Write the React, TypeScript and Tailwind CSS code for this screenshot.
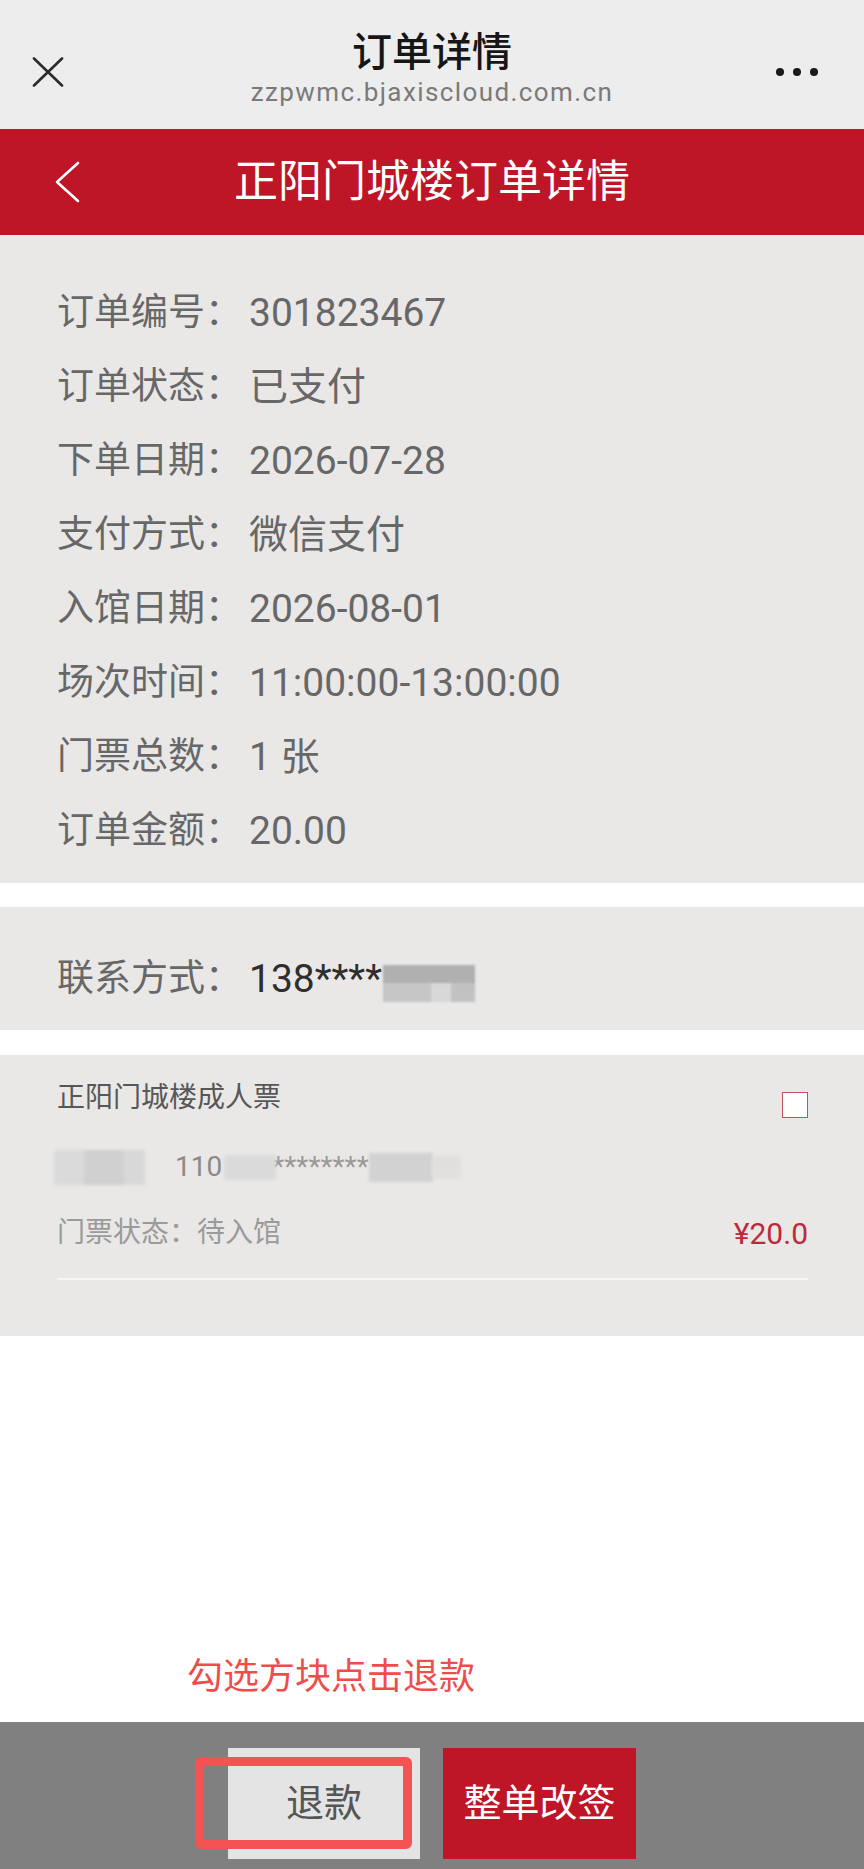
import React from "react";

const rows = [
  ["订单编号：", "301823467"],
  ["订单状态：", "已支付"],
  ["下单日期：", "2026-07-28"],
  ["支付方式：", "微信支付"],
  ["入馆日期：", "2026-08-01"],
  ["场次时间：", "11:00:00-13:00:00"],
  ["门票总数：", "1 张"],
  ["订单金额：", "20.00"],
];

export default function App() {
  return (
    <div className="w-full min-h-[1869px] bg-white flex flex-col font-[Roboto,'Noto_Sans_CJK_SC',sans-serif]">
      {/* browser title bar */}
      <div className="h-[129px] bg-[#ededed] grid grid-cols-[1fr_auto_1fr]">
        <div className="pl-[32px] pt-[57px]">
          <svg width="32" height="30" viewBox="0 0 32 30" fill="none" stroke="#2b2b2b" strokeWidth="2.6" strokeLinecap="round">
            <path d="M2 1.5 L30 28.5 M30 1.5 L2 28.5" />
          </svg>
        </div>
        <div className="pt-[30px] flex flex-col items-center">
          <div className="text-[40px] leading-[46px] font-medium text-[#161616]">订单详情</div>
          <div className="text-[26px] leading-[32px] tracking-[1.4px] text-[#7a7a7a]">zzpwmc.bjaxiscloud.com.cn</div>
        </div>
        <div className="flex justify-end items-start pr-[46px] pt-[68px] gap-[9px]">
          <div className="w-[8px] h-[8px] rounded-full bg-[#1a1a1a]" />
          <div className="w-[8px] h-[8px] rounded-full bg-[#1a1a1a]" />
          <div className="w-[8px] h-[8px] rounded-full bg-[#1a1a1a]" />
        </div>
      </div>

      {/* red header */}
      <div className="h-[106px] bg-[#be1527] grid grid-cols-[1fr_auto_1fr] items-center">
        <div className="pl-[54px] flex items-center">
          <svg width="26" height="42" viewBox="0 0 26 42" fill="none" stroke="#fff" strokeWidth="2.6" strokeLinecap="round" strokeLinejoin="round">
            <path d="M24 2 L3 21 L24 40" />
          </svg>
        </div>
        <div className="text-[44px] leading-[52px] text-white">正阳门城楼订单详情</div>
        <div />
      </div>

      {/* order info */}
      <div className="bg-[#e9e8e7] pt-[41px] pb-[15px] px-[57px]">
        {rows.map(([k, v]) => (
          <div key={k} className="flex items-center h-[74px] text-[37px] text-[#676767]">
            <span className="w-[192px] shrink-0">{k}</span>
            <span className="text-[39px]">{v}</span>
          </div>
        ))}
      </div>

      {/* contact */}
      <div className="mt-[24px] bg-[#e9e8e7] pt-[35px] pb-[14px] px-[57px]">
        <div className="flex items-center h-[74px] text-[37px] text-[#676767]">
          <span className="w-[192px] shrink-0">联系方式：</span>
          <span className="text-[39px] text-[#2e2e2e]">138****</span>
          <div className="ml-[1px] mt-[8px] w-[92px] h-[37px] flex flex-col blur-[1px]">
            <div className="h-[18px] bg-[#b0b0b0]" />
            <div className="h-[19px] flex">
              <div className="w-[48px] bg-[#c6c6c6]" />
              <div className="w-[20px] bg-[#d8d8d8]" />
              <div className="w-[24px] bg-[#c2c2c2]" />
            </div>
          </div>
        </div>
      </div>

      {/* ticket */}
      <div className="mt-[25px] bg-[#e9e8e7] pt-[23px] pb-[56px] pl-[57px] pr-[56px]">
        <div className="flex justify-between items-start h-[40px]">
          <span className="text-[28px] leading-[40px] text-[#575757]">正阳门城楼成人票</span>
          <div className="mt-[14px] w-[26px] h-[26px] bg-white border-[1.5px] border-[#c4505e]" />
        </div>
        <div className="mt-[29px] flex items-center h-[40px]">
          <div className="ml-[-3px] w-[91px] h-[35px] flex blur-[1.5px]">
            <div className="w-[30px] bg-[#dadada]" />
            <div className="w-[40px] bg-[#d0d0d0]" />
            <div className="w-[21px] bg-[#d8d8d8]" />
          </div>
          <span className="ml-[30px] text-[28px] text-[#8a8a8a]">110</span>
          <div className="ml-[2px] w-[52px] h-[25px] bg-[#dadada] rounded-[4px] blur-[1.5px]" />
          <span className="ml-[-4px] text-[28px] leading-[40px] text-[#999]">********</span>
          <div className="w-[64px] h-[29px] bg-[#d2d2d2] blur-[1.5px]" />
          <div className="w-[28px] h-[22px] bg-[#e0dfde] blur-[2px]" />
        </div>
        <div className="mt-[26px] flex justify-between items-center h-[40px]">
          <span className="text-[28px] text-[#9a9a9a]">门票状态：待入馆</span>
          <span className="text-[30px] text-[#c0273a]">¥20.0</span>
        </div>
        <div className="mt-[25px] h-[2px] bg-[#f6f6f6]" />
      </div>

      {/* hint */}
      <div className="flex-1 flex flex-col justify-end pb-[23px] pl-[187px]">
        <span className="text-[36px] leading-[44px] text-[#f04c4c]">勾选方块点击退款</span>
      </div>

      {/* bottom bar */}
      <div className="relative h-[147px] bg-[#808080] flex justify-center gap-[23px] pt-[26px]">
        <button className="w-[192px] h-[111px] bg-[#e4e4e4] text-[38px] text-[#555]">退款</button>
        <button className="w-[193px] h-[111px] bg-[#be1527] text-[38px] text-white">整单改签</button>
        <div className="absolute left-[195px] top-[35px] w-[217px] h-[92px] border-[9px] border-[#f55252] rounded-[6px]" />
      </div>
    </div>
  );
}
